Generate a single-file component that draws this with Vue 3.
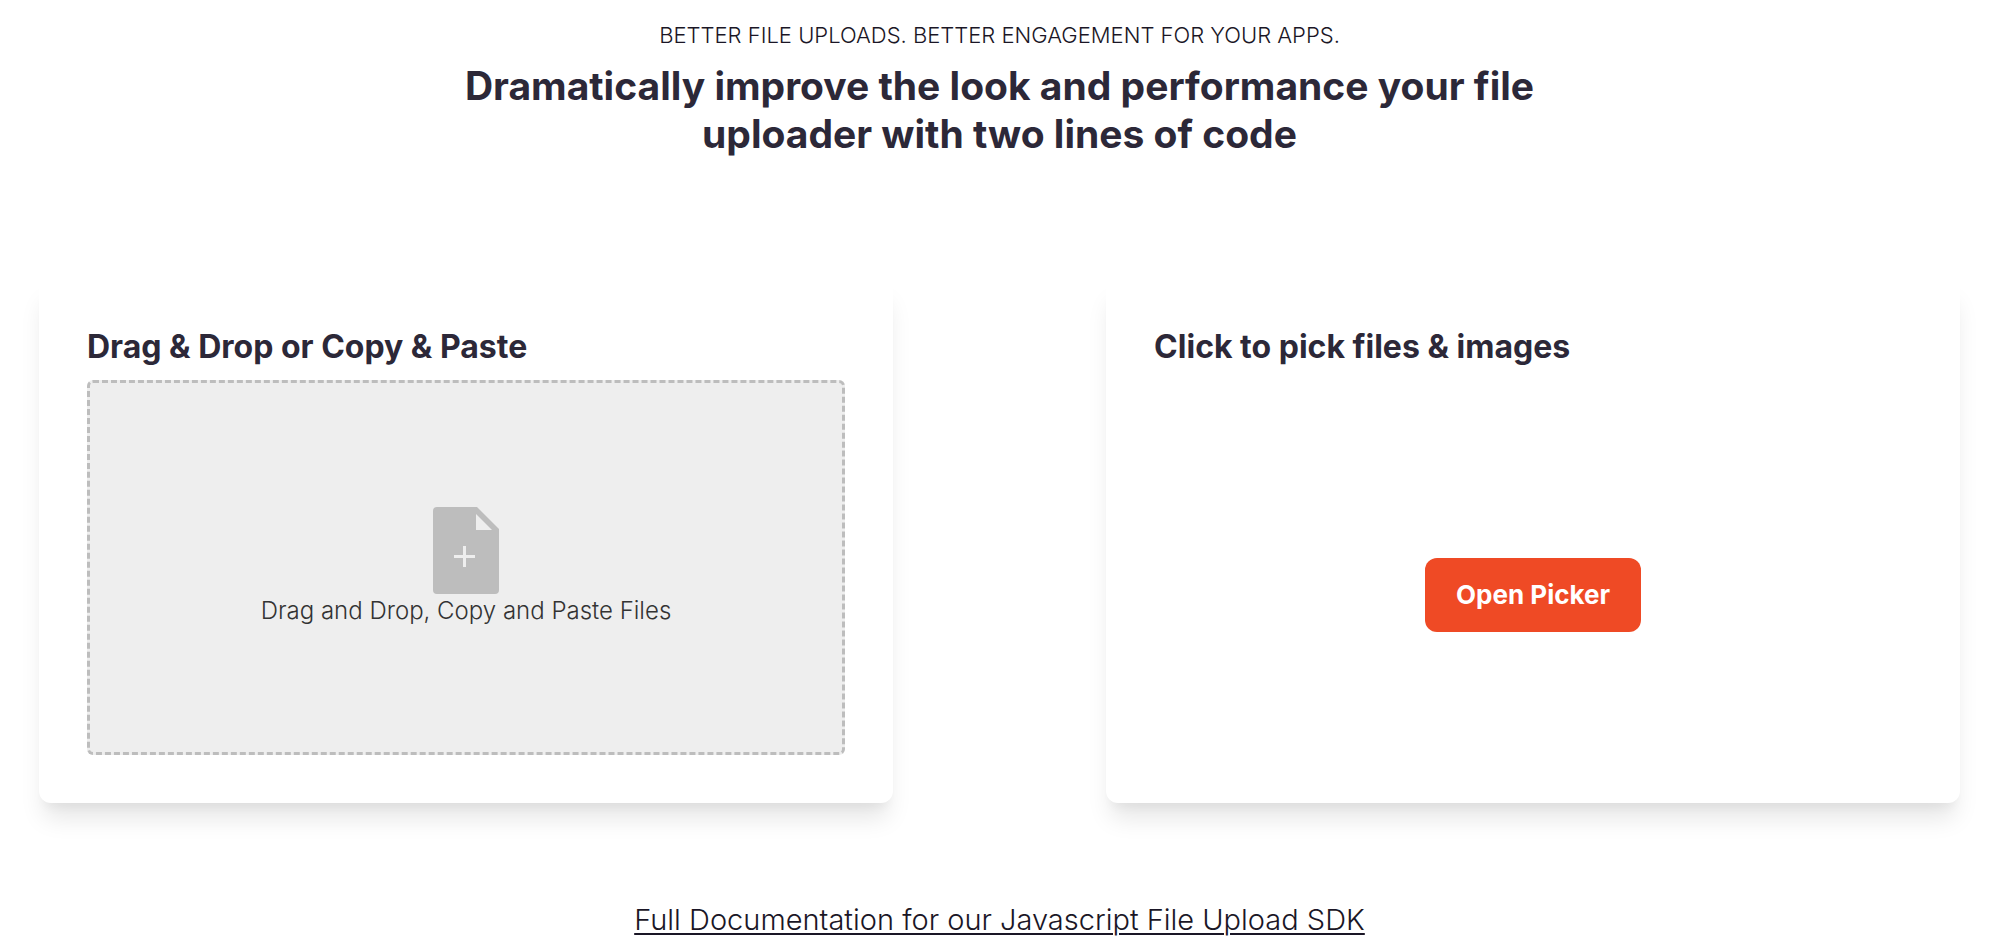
<script setup>
import { ref } from 'vue'

const fileInput = ref(null)
const dragging = ref(false)

function openPicker() {
  fileInput.value.click()
}
</script>

<template>
  <main class="page">
    <header class="intro">
      <p class="eyebrow">BETTER FILE UPLOADS. BETTER ENGAGEMENT FOR YOUR APPS.</p>
      <h1 class="headline">Dramatically improve the look and performance your file uploader with two lines of code</h1>
    </header>

    <div class="cards">
      <section class="card">
        <h2 class="card-title">Drag &amp; Drop or Copy &amp; Paste</h2>
        <button
          type="button"
          class="dropzone"
          :class="{ active: dragging }"
          @click="openPicker"
          @dragover.prevent="dragging = true"
          @dragleave="dragging = false"
          @drop.prevent="dragging = false"
        >
          <svg class="file-icon" viewBox="0 0 66 87" aria-hidden="true">
            <path
              fill="#bdbdbd"
              fill-rule="evenodd"
              d="M4 0H44L66 22V83a4 4 0 0 1-4 4H4a4 4 0 0 1-4-4V4a4 4 0 0 1 4-4ZM43 7V23H59Z"
            />
            <path fill="none" stroke="#eee" stroke-width="3" d="M21 49.500H42M31.500 39V60" />
          </svg>
          <span>Drag and Drop, Copy and Paste Files</span>
        </button>
      </section>

      <section class="card">
        <h2 class="card-title">Click to pick files &amp; images</h2>
        <div class="picker">
          <button type="button" class="open-button" @click="openPicker">Open Picker</button>
          <input ref="fileInput" type="file" multiple hidden aria-label="Pick files" />
        </div>
      </section>
    </div>

    <footer class="docs">
      <a href="#">Full Documentation for our Javascript File Upload SDK</a>
    </footer>
  </main>
</template>

<style>
body {
  margin: 0;
  background: #fff;
}
</style>

<style scoped>
.page {
  box-sizing: border-box;
  padding: 20px 33px 0 39px;
  font-family: Inter, "Open Sans", sans-serif;
  font-weight: 300;
  color: #1a1626;
}

.intro {
  max-width: 1140px;
  margin: 0 auto;
  text-align: center;
}

.eyebrow {
  margin: 0 0 12px;
  font-size: 22px;
  line-height: 30px;
}

.headline {
  margin: 0;
  font-size: 39px;
  line-height: 48px;
  font-weight: 700;
  color: #2c2838;
}

.cards {
  display: grid;
  grid-template-columns: 1fr 1fr;
  column-gap: 11.1%;
  margin-top: 120px;
}

.card {
  display: flex;
  flex-direction: column;
  padding: 48px;
  border-radius: 12px;
  background: #fff;
  box-shadow:
    0 20px 25px -5px rgba(0, 0, 0, 0.1),
    0 10px 10px -5px rgba(0, 0, 0, 0.04);
}

.card-title {
  margin: 0 0 12px;
  font-size: 32px;
  line-height: 42px;
  font-weight: 700;
  color: #2c2838;
}

.dropzone {
  box-sizing: border-box;
  display: flex;
  flex-direction: column;
  align-items: center;
  justify-content: center;
  width: 100%;
  min-height: 375px;
  padding: 0;
  border: 3px dashed #bdbdbd;
  border-radius: 6px;
  background: #eee;
  font: inherit;
  font-size: 24px;
  line-height: 34px;
  color: #333;
  cursor: pointer;
}

.dropzone.active {
  background: #e4e4e4;
}

.file-icon {
  width: 66px;
  height: 87px;
}

.picker {
  padding-top: 178px;
  text-align: center;
}

.open-button {
  padding: 20px 31px;
  border: 0;
  border-radius: 12px;
  background: #ef4a25;
  color: #fff;
  font: inherit;
  font-size: 26px;
  line-height: 34px;
  font-weight: 700;
  cursor: pointer;
}

.docs {
  margin-top: 97px;
  text-align: center;
  font-size: 29px;
  line-height: 40px;
}

.docs a {
  color: inherit;
  text-decoration: underline;
  text-decoration-thickness: 2px;
  text-underline-offset: 3px;
}
</style>
